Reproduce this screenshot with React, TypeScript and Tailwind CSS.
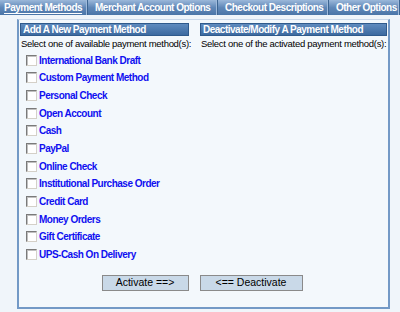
import { useState } from "react";

const tabs = [
  { label: "Payment Methods", width: "w-[88px]", pad: "pl-[4px]", active: true },
  { label: "Merchant Account Options", width: "w-[130px]", pad: "pl-[7px]", active: false },
  { label: "Checkout Descriptions", width: "w-[111px]", pad: "pl-[7px]", active: false },
  { label: "Other Options", width: "flex-1", pad: "pl-[7px]", active: false },
];

const methods = [
  "International Bank Draft",
  "Custom Payment Method",
  "Personal Check",
  "Open Account",
  "Cash",
  "PayPal",
  "Online Check",
  "Institutional Purchase Order",
  "Credit Card",
  "Money Orders",
  "Gift Certificate",
  "UPS-Cash On Delivery",
];

export default function App() {
  const [checked, setChecked] = useState<Record<string, boolean>>({});

  return (
    <div className="w-[400px] h-[312px] bg-[#f0f5fa] overflow-hidden" style={{ fontFamily: '"Liberation Sans", Arial, sans-serif' }}>
      {/* Tabs */}
      <div className="flex h-[15px] bg-gradient-to-b from-[#9bb8da] via-[#6188b8] to-[#4a75a8]">
        {tabs.map((tab) => (
          <div
            key={tab.label}
            className={`${tab.width} ${tab.pad} flex items-center h-full border-r border-r-[#3d6592] shadow-[inset_-1px_0_0_#9fbadb] text-white font-bold text-[10px] tracking-[-0.5px] whitespace-nowrap`}
          >
            <span className={tab.active ? "underline underline-offset-[2px]" : ""}>{tab.label}</span>
          </div>
        ))}
      </div>

      {/* Panel */}
      <div className="mt-[4px] ml-[17px] w-[373px] border-x-2 border-b-2 border-t border-[#7399c6] border-t-[#c9d8ea] bg-[#f3f8fc] pt-[3px] px-[1px] pb-[16px]">
        <div className="flex gap-[11px]">
          {/* Add column */}
          <div className="w-[169px]">
            <div className="h-[13px] flex items-center pl-[2px] border border-[#2f5a8c] bg-gradient-to-b from-[#5f8bbe] to-[#3c6aa0] text-white font-bold text-[10px] tracking-[-0.5px] whitespace-nowrap">
              Add A New Payment Method
            </div>
            <div className="mt-[1px] pl-[1px] text-[9.5px] tracking-[-0.3px] text-black whitespace-nowrap">
              Select one of available payment method(s):
            </div>
            <div className="flex flex-col">
              {methods.map((m) => (
                <label key={m} className="h-[17.7px] flex items-center pl-[6px] cursor-pointer">
                  <span
                    onClick={() => setChecked((p) => ({ ...p, [m]: !p[m] }))}
                    className="w-[11px] h-[11px] bg-white border border-t-[#7a7a7a] border-l-[#7a7a7a] border-b-[#d4d0c8] border-r-[#d4d0c8] shadow-[inset_1px_1px_0_#c0c0c0] flex items-center justify-center text-[9px] leading-none"
                  >
                    {checked[m] ? "✓" : ""}
                  </span>
                  <span className="ml-[2px] text-[#1010f0] font-bold text-[10px] tracking-[-0.5px] whitespace-nowrap">
                    {m}
                  </span>
                </label>
              ))}
            </div>
          </div>

          {/* Deactivate column */}
          <div className="flex-1">
            <div className="h-[13px] flex items-center pl-[2px] border border-[#2f5a8c] bg-gradient-to-b from-[#5f8bbe] to-[#3c6aa0] text-white font-bold text-[10px] tracking-[-0.5px] whitespace-nowrap">
              Deactivate/Modify A Payment Method
            </div>
            <div className="mt-[1px] pl-[1px] text-[9.5px] tracking-[-0.3px] text-black whitespace-nowrap">
              Select one of the activated payment method(s):
            </div>
          </div>
        </div>

        {/* Buttons */}
        <div className="mt-[11px] flex justify-center gap-[11px] pr-[3px]">
          <button className="w-[87px] h-[16px] bg-[#c9d9e8] border border-[#8a8a8a] text-black text-[10.5px] leading-none">
            Activate ==&gt;
          </button>
          <button className="w-[103px] h-[16px] bg-[#c9d9e8] border border-[#8a8a8a] text-black text-[10.5px] leading-none">
            &lt;== Deactivate
          </button>
        </div>
      </div>
    </div>
  );
}
